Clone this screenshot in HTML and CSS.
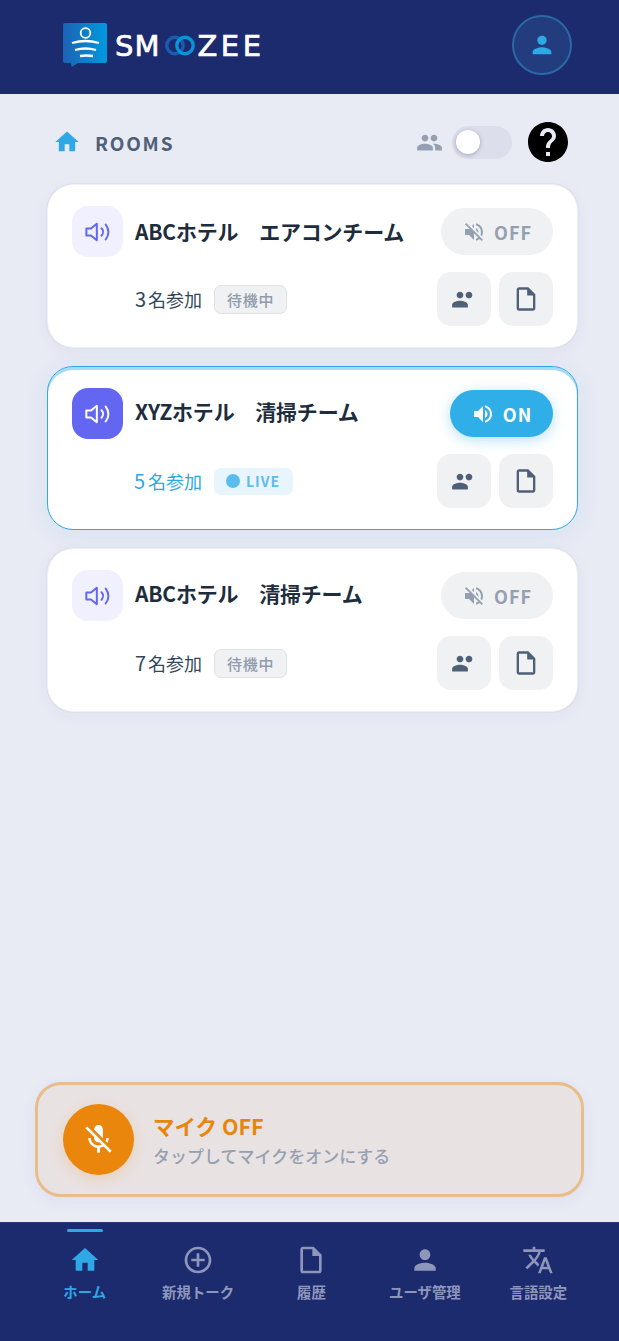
FILE: index.html
```html
<!DOCTYPE html>
<html lang="ja">
<head>
<meta charset="utf-8">
<title>SMOOZEE</title>
<link rel="stylesheet" href="styles.css">
</head>
<body>
<svg class="defs" width="0" height="0" aria-hidden="true">
  <defs>
    <symbol id="i-home" viewBox="0 0 24 24"><path d="M10 20v-6h4v6h5v-8h3L12 3 2 12h3v8z"/></symbol>
    <symbol id="i-person" viewBox="0 0 24 24"><path d="M12 12c2.21 0 4-1.79 4-4s-1.79-4-4-4-4 1.79-4 4 1.79 4 4 4zm0 2c-2.67 0-8 1.34-8 4v2h16v-2c0-2.66-5.33-4-8-4z"/></symbol>
    <symbol id="i-people" viewBox="0 0 24 24"><path d="M16 11c1.66 0 2.99-1.34 2.99-3S17.66 5 16 5c-1.66 0-3 1.34-3 3s1.34 3 3 3zm-8 0c1.66 0 2.99-1.34 2.99-3S9.66 5 8 5C6.34 5 5 6.34 5 8s1.34 3 3 3zm0 2c-2.33 0-7 1.17-7 3.5V19h14v-2.5c0-2.33-4.67-3.5-7-3.5zm8 0c-.29 0-.62.02-.97.05 1.16.84 1.97 1.97 1.97 3.45V19h6v-2.5c0-2.33-4.67-3.5-7-3.5z"/></symbol>
    <symbol id="i-members" viewBox="0 0 24 24"><path d="M16 11c1.66 0 2.99-1.34 2.99-3S17.66 5 16 5c-1.66 0-3 1.34-3 3s1.34 3 3 3zm-8 0c1.66 0 2.99-1.34 2.99-3S9.66 5 8 5C6.34 5 5 6.34 5 8s1.34 3 3 3zm0 2c-2.33 0-7 1.17-7 3.5V19h14v-2.5c0-2.33-4.67-3.5-7-3.5z"/></symbol>
    <symbol id="i-file" viewBox="0 0 24 24"><path d="M14 2H6c-1.1 0-1.99.9-1.99 2L4 20c0 1.1.89 2 1.99 2H18c1.1 0 2-.9 2-2V8l-6-6zM6 20V4h7v5h5v11H6z"/></symbol>
    <symbol id="i-vol-off" viewBox="0 0 24 24"><path d="M16.5 12c0-1.77-1.02-3.29-2.5-4.03v2.21l2.45 2.45c.03-.2.05-.41.05-.63zm2.5 0c0 .94-.2 1.82-.54 2.64l1.51 1.51C20.63 14.91 21 13.5 21 12c0-4.28-2.99-7.86-7-8.77v2.06c2.89.86 5 3.54 5 6.71zM4.27 3L3 4.27 7.73 9H3v6h4l5 5v-6.73l4.25 4.25c-.67.52-1.42.93-2.25 1.18v2.06c1.38-.31 2.63-.95 3.69-1.81L19.73 21 21 19.73l-9-9L4.27 3zM12 4L9.91 6.09 12 8.18V4z"/></symbol>
    <symbol id="i-vol-on" viewBox="0 0 24 24"><path d="M3 9v6h4l5 5V4L7 9H3zm13.5 3c0-1.77-1.02-3.29-2.5-4.03v8.05c1.48-.73 2.5-2.25 2.5-4.02zM14 3.23v2.06c2.89.86 5 3.54 5 6.71s-2.11 5.85-5 6.71v2.06c4.01-.91 7-4.49 7-8.77 0-4.28-2.99-7.86-7-8.77z"/></symbol>
    <symbol id="i-speaker" viewBox="0 0 24 24"><path class="stroke" d="M11 5 6 9H2v6h4l5 4z"/><path class="stroke" d="M15 8.8a4.600 4.600 0 0 1 0 6.400"/><path class="stroke" d="M18.600 5.600a10 10 0 0 1 0 12.800"/></symbol>
  </defs>
</svg>

<header class="topbar">
  <div class="logo">
    <svg class="logo-mark" viewBox="0 0 44 44" width="44" height="44" aria-hidden="true">
      <defs>
        <linearGradient id="lg" x1="0" y1="0" x2="1" y2="0"><stop offset="0" stop-color="#1c62b4"/><stop offset="1" stop-color="#009ade"/></linearGradient>
      </defs>
      <path fill="url(#lg)" d="M2 0h40a2 2 0 0 1 2 2v36a2 2 0 0 1-2 2H15l-6.500 4L8 40H2a2 2 0 0 1-2-2V2a2 2 0 0 1 2-2z"/>
      <circle cx="22.500" cy="10" r="4.800" fill="none" stroke="#fff" stroke-width="1.800"/>
      <path d="M9 20q13.500-4 27 0" fill="none" stroke="#fff" stroke-width="2.300"/>
      <path d="M12 27q10.500-3 21 0" fill="none" stroke="#fff" stroke-width="2.300"/>
      <path d="M17 33q6.500-1 13 0" fill="none" stroke="#fff" stroke-width="2.300"/>
    </svg>
    <span class="logo-word">SM</span>
    <svg class="logo-rings" viewBox="0 0 30 21" width="30" height="21" aria-hidden="true">
      <circle cx="10" cy="10.500" r="8.200" fill="none" stroke="#1a5cb0" stroke-width="3.400"/>
      <circle cx="20" cy="10.500" r="8.200" fill="none" stroke="#0a94d8" stroke-width="3.400"/>
    </svg>
    <span class="logo-word logo-word-wide">ZEE</span>
  </div>
  <button class="avatar" type="button" aria-label="ユーザ"><svg class="ico-28"><use href="#i-person"/></svg></button>
</header>

<main class="content">
  <div class="section-head">
    <svg class="ico-section"><use href="#i-home"/></svg>
    <h1 class="section-title">ROOMS</h1>
    <div class="section-tools">
      <svg class="ico-people"><use href="#i-people"/></svg>
      <span class="toggle"><span class="knob"></span></span>
      <svg class="ico-help" viewBox="0 0 24 24"><path d="M12 2C6.480 2 2 6.480 2 12s4.480 10 10 10 10-4.480 10-10S17.520 2 12 2zm1 17h-2v-2h2v2zm2.070-7.750l-.9.920C13.450 12.900 13 13.500 13 15h-2v-.5c0-1.100.45-2.100 1.170-2.830l1.240-1.260c.37-.36.590-.86.590-1.410 0-1.100-.9-2-2-2s-2 .9-2 2H8c0-2.210 1.790-4 4-4s4 1.790 4 4c0 .88-.36 1.680-.93 2.250z"/></svg>
    </div>
  </div>

  <section class="rooms">
    <article class="card">
      <div class="card-top">
        <span class="room-icon"><svg class="ico-28"><use href="#i-speaker"/></svg></span>
        <h2 class="room-name">ABCホテル　エアコンチーム</h2>
        <button class="power" type="button"><svg class="ico-24"><use href="#i-vol-off"/></svg>OFF</button>
      </div>
      <div class="card-bottom">
        <span class="count"><b class="num">3</b>名参加</span>
        <span class="badge">待機中</span>
        <div class="actions">
          <button class="square" type="button" aria-label="メンバー"><svg class="ico-27"><use href="#i-members"/></svg></button>
          <button class="square" type="button" aria-label="履歴"><svg class="ico-28"><use href="#i-file"/></svg></button>
        </div>
      </div>
    </article>

    <article class="card card-live">
      <div class="card-top">
        <span class="room-icon"><svg class="ico-28"><use href="#i-speaker"/></svg></span>
        <h2 class="room-name">XYZホテル　清掃チーム</h2>
        <button class="power" type="button"><svg class="ico-24"><use href="#i-vol-on"/></svg>ON</button>
      </div>
      <div class="card-bottom">
        <span class="count"><b class="num">5</b>名参加</span>
        <span class="badge"><i class="dot"></i>LIVE</span>
        <div class="actions">
          <button class="square" type="button" aria-label="メンバー"><svg class="ico-27"><use href="#i-members"/></svg></button>
          <button class="square" type="button" aria-label="履歴"><svg class="ico-28"><use href="#i-file"/></svg></button>
        </div>
      </div>
    </article>

    <article class="card">
      <div class="card-top">
        <span class="room-icon"><svg class="ico-28"><use href="#i-speaker"/></svg></span>
        <h2 class="room-name">ABCホテル　清掃チーム</h2>
        <button class="power" type="button"><svg class="ico-24"><use href="#i-vol-off"/></svg>OFF</button>
      </div>
      <div class="card-bottom">
        <span class="count"><b class="num">7</b>名参加</span>
        <span class="badge">待機中</span>
        <div class="actions">
          <button class="square" type="button" aria-label="メンバー"><svg class="ico-27"><use href="#i-members"/></svg></button>
          <button class="square" type="button" aria-label="履歴"><svg class="ico-28"><use href="#i-file"/></svg></button>
        </div>
      </div>
    </article>
  </section>
</main>

<div class="mic-bar">
  <span class="mic-btn">
    <svg class="ico-mic" viewBox="0 0 24 24"><path d="M19 11h-1.700c0 .74-.16 1.430-.43 2.050l1.230 1.230c.56-.98.9-2.090.9-3.280zm-4.020.17c0-.06.02-.11.02-.17V5c0-1.660-1.340-3-3-3S9 3.340 9 5v.18l5.980 5.990zM4.270 3L3 4.270l6.010 6.010V11c0 1.660 1.330 3 2.990 3 .22 0 .44-.03.65-.08l1.660 1.660c-.71.33-1.500.52-2.310.52-2.760 0-5.300-2.100-5.300-5.100H5c0 3.410 2.720 6.230 6 6.720V21h2v-3.280c.91-.13 1.770-.45 2.540-.9L19.730 21 21 19.730 4.270 3z"/></svg>
  </span>
  <div class="mic-text">
    <strong class="mic-title">マイク OFF</strong>
    <span class="mic-sub">タップしてマイクをオンにする</span>
  </div>
</div>

<nav class="tabbar">
  <a class="tab tab-active"><svg class="ico-tab"><use href="#i-home"/></svg><span>ホーム</span></a>
  <a class="tab"><svg class="ico-tab" viewBox="0 0 24 24"><path d="M13 7h-2v4H7v2h4v4h2v-4h4v-2h-4V7zm-1-5C6.480 2 2 6.480 2 12s4.480 10 10 10 10-4.480 10-10S17.520 2 12 2zm0 18c-4.410 0-8-3.590-8-8s3.590-8 8-8 8 3.590 8 8-3.590 8-8 8z"/></svg><span>新規トーク</span></a>
  <a class="tab"><svg class="ico-tab"><use href="#i-file"/></svg><span>履歴</span></a>
  <a class="tab"><svg class="ico-tab"><use href="#i-person"/></svg><span>ユーザ管理</span></a>
  <a class="tab"><svg class="ico-tab" viewBox="0 0 24 24"><path d="M12.870 15.070l-2.540-2.510.03-.03c1.740-1.940 2.980-4.170 3.710-6.530H17V4h-7V2H8v2H1v1.990h11.170C11.500 7.920 10.440 9.750 9 11.350 8.070 10.320 7.300 9.190 6.690 8h-2c.73 1.630 1.730 3.170 2.980 4.560l-5.090 5.020L4 19l5-5 3.110 3.110.76-2.040zM18.500 10h-2L12 22h2l1.120-3h4.750L21 22h2l-4.500-12zm-2.620 7l1.620-4.330L19.120 17h-3.240z"/></svg><span>言語設定</span></a>
</nav>
</body>
</html>
```

FILE: styles.css
```css
* { box-sizing: border-box; }
html, body { margin: 0; height: 100%; }
body {
  display: flex;
  flex-direction: column;
  height: 100vh;
  overflow: hidden;
  background: #e8eaf4;
  font-family: "Noto Sans CJK JP", "Noto Sans", sans-serif;
  color: #1e2d3d;
}
.defs { position: absolute; }
svg { fill: currentColor; display: block; flex: none; }
.stroke { fill: none; stroke: currentColor; stroke-width: 1.7; stroke-linecap: round; stroke-linejoin: round; }
button { font-family: inherit; border: 0; padding: 0; cursor: pointer; }
h1, h2 { margin: 0; }

.ico-24 { width: 24px; height: 24px; }
.ico-27 { width: 27px; height: 27px; }
.ico-28 { width: 28px; height: 28px; }

/* Top bar */
.topbar {
  flex: none;
  height: 94px;
  background: #1c2a6e;
  display: flex;
  align-items: center;
  justify-content: space-between;
  padding: 0 47px 4px 63px;
}
.logo { display: flex; align-items: center; }
.logo-mark { margin-right: 8px; }
.logo-word {
  font-family: "DejaVu Sans", sans-serif;
  font-weight: 400;
  font-size: 29px;
  line-height: 1;
  letter-spacing: 1px;
  margin-top: 2px;
  color: #fff;
  -webkit-text-stroke: .7px #fff;
}
.logo-word-wide { letter-spacing: 3.5px; margin-right: -3.5px; }
.logo-rings { margin: 1px 2px 0 5px; }
.avatar {
  width: 60px;
  height: 60px;
  border-radius: 50%;
  background: #223c7e;
  border: 2px solid #2a69a5;
  color: #2fa8e6;
  display: flex;
  align-items: center;
  justify-content: center;
}

/* Content */
.content { flex: 1; padding: 24px 41px 0 47px; min-height: 0; }
.section-head { display: flex; align-items: center; height: 48px; padding: 0 0 0 6px; margin-bottom: 18px; }
.ico-section { width: 28px; height: 28px; color: #2fa8e6; }
.section-title {
  font-size: 19px;
  font-weight: 700;
  letter-spacing: 1.8px;
  color: #4f6076;
  margin-left: 14px;
  line-height: 1;
}
.section-tools { margin-left: auto; display: flex; align-items: center; padding-right: 6px; }
.ico-people { width: 27px; height: 27px; color: #94a0b2; margin-right: 9px; }
.toggle {
  width: 60px;
  height: 33px;
  border-radius: 17px;
  background: #dcdfeb;
  display: flex;
  align-items: center;
  padding-left: 4px;
}
.knob { width: 24px; height: 24px; border-radius: 50%; background: #fff; box-shadow: 0 1px 4px rgba(40, 50, 90, .35); }
.ico-help { width: 48px; height: 48px; color: #000; margin-left: 12px; }

/* Cards */
.rooms { display: flex; flex-direction: column; gap: 18px; }
.card {
  height: 164px;
  background: #fff;
  border: 1px solid #f0f1f6;
  border-radius: 26px;
  padding: 21px 24px;
  box-shadow: 0 0 1px rgba(60, 70, 130, .25), 0 4px 18px rgba(60, 70, 130, .04);
  display: flex;
  flex-direction: column;
  gap: 15px;
}
.card-top { display: flex; align-items: center; height: 51px; }
.room-icon {
  width: 51px;
  height: 51px;
  border-radius: 16px;
  background: #f0f0fe;
  color: #6366f1;
  display: flex;
  align-items: center;
  justify-content: center;
}
.room-name { font-size: 21px; font-weight: 700; letter-spacing: -.2px; color: #1e2d3d; margin-left: 12px; line-height: 1.2; white-space: nowrap; }
.card:not(:first-child) .room-name { margin-bottom: 4px; }
.power {
  margin-left: auto;
  height: 47px;
  width: 112px;
  border-radius: 24px;
  background: #f0f1f3;
  color: #94a0b2;
  font-size: 18px;
  font-weight: 700;
  letter-spacing: 1px;
  display: flex;
  align-items: center;
  justify-content: center;
  gap: 8px;
}
.card-bottom { display: flex; align-items: center; height: 54px; padding-left: 63px; }
.count { font-size: 18px; color: #33475b; width: 79px; line-height: 1; white-space: nowrap; }
.num { font-weight: 400; font-size: 20px; margin-right: 2px; }
.badge {
  height: 29px;
  padding: 0 12px;
  border: 1px solid #dfe1e5;
  border-radius: 7px;
  background: #f0f1f3;
  color: #8f9bab;
  font-size: 15px;
  font-weight: 500;
  letter-spacing: .7px;
  display: flex;
  align-items: center;
}
.actions { margin-left: auto; display: flex; gap: 8px; }
.square {
  width: 54px;
  height: 54px;
  border-radius: 14px;
  background: #f0f1f3;
  color: #4f6076;
  display: flex;
  align-items: center;
  justify-content: center;
}

/* Live card */
.card-live {
  border-color: #2fa8e6;
  box-shadow: inset 0 3px 0 #a5dbf5, 0 4px 24px rgba(47, 168, 230, .1);
}
.card-live .room-icon { background: #6366f1; color: #fff; }
.card-live .power {
  width: 103px;
  background: #30aee8;
  color: #fff;
  box-shadow: 0 3px 14px rgba(47, 168, 230, .35);
}
.card-live .count { color: #2fa8e6; }
.card-live .num { margin-right: 3px; margin-left: -1px; }
.card-live .badge {
  height: 27px;
  padding: 0 13px 0 12px;
  border: 0;
  background: #e8f5fd;
  color: #5dbcee;
  font-size: 14px;
  font-weight: 700;
  letter-spacing: 1px;
  gap: 6px;
}
.dot { width: 14px; height: 14px; border-radius: 50%; background: #5dbcee; }

/* Mic bar */
.mic-bar {
  flex: none;
  height: 115px;
  margin: 0 35px 25px;
  padding: 0 25px;
  background: #e9e2e2;
  border: 3px solid #e8bd8a;
  border-radius: 26px;
  display: flex;
  align-items: center;
  gap: 19px;
  box-shadow: 0 4px 16px rgba(60, 70, 130, .06);
}
.mic-btn {
  width: 71px;
  height: 71px;
  border-radius: 50%;
  background: #ea860c;
  color: #fff;
  display: flex;
  align-items: center;
  justify-content: center;
  box-shadow: 0 4px 14px rgba(234, 134, 12, .2);
}
.ico-mic { width: 35px; height: 35px; }
.mic-text { display: flex; flex-direction: column; gap: 6px; }
.mic-title { font-size: 21.5px; font-weight: 700; color: #e8860c; line-height: 26px; }
.mic-sub { font-size: 17px; font-weight: 500; color: #94a0b2; line-height: 22px; }

/* Tab bar */
.tabbar {
  flex: none;
  height: 119px;
  background: #1c2a6e;
  border-top: 1px solid #2c3878;
  display: grid;
  grid-template-columns: repeat(5, 1fr);
  padding: 0 24px 0 28px;
}
.tab {
  position: relative;
  display: flex;
  flex-direction: column;
  align-items: center;
  padding-top: 21px;
  color: #8f96bc;
  font-size: 14.4px;
  font-weight: 700;
  line-height: 20px;
}
.ico-tab { width: 32px; height: 32px; margin-bottom: 6px; }
.tab-active { color: #2fa8e6; }
.tab-active::before {
  content: "";
  position: absolute;
  top: 6px;
  left: 50%;
  width: 36px;
  height: 3px;
  margin-left: -18px;
  border-radius: 2px;
  background: #2fa8e6;
}
```
